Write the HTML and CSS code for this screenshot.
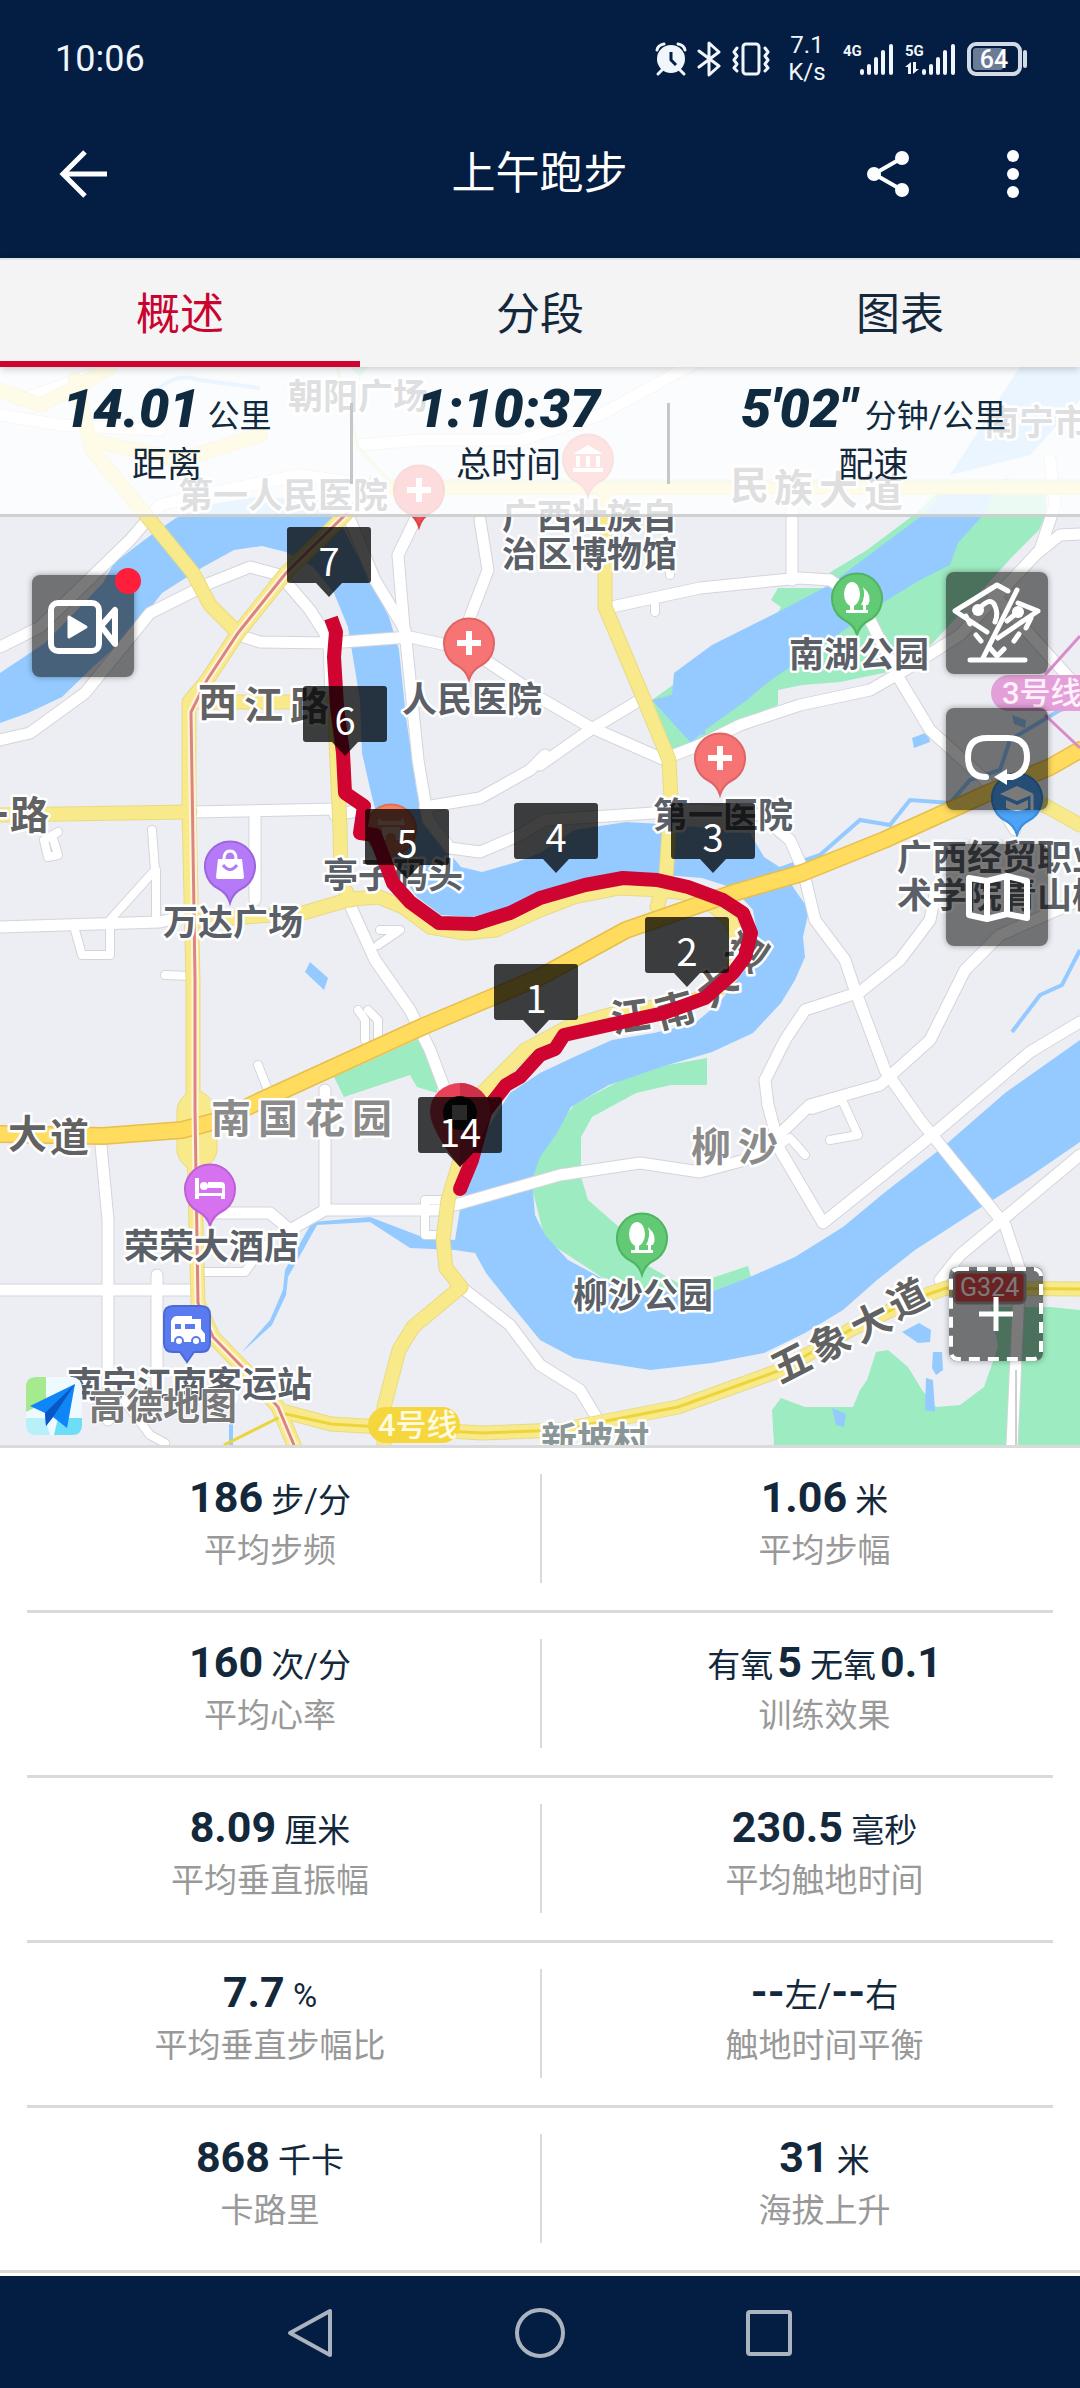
FILE: index.html
```html
<!DOCTYPE html>
<html lang="zh-CN">
<head>
<meta charset="utf-8">
<meta name="viewport" content="width=device-width, initial-scale=1">
<title>上午跑步</title>
<link rel="stylesheet" href="styles.css">
</head>
<body>
<header class="top">
  <div class="status">
    <span class="clock">10:06</span>
    <div class="indicators">
      <svg class="icon" width="32" height="36" viewBox="0 0 32 36" aria-label="闹钟">
        <g fill="none" stroke="#f1f5fc" stroke-width="3" stroke-linecap="round"><path d="M2 9Q3 4 9 3M30 9Q29 4 23 3M7 29l-4 4M25 29l4 4"/></g>
        <circle cx="16" cy="18" r="14" fill="#f1f5fc"/><path d="M16 11v8l5 5" fill="none" stroke="#031e42" stroke-width="3"/>
      </svg>
      <svg class="icon" width="24" height="36" viewBox="0 0 24 36" aria-label="蓝牙"><path d="M2 10l20 15-10 9V2l10 9L2 26" fill="none" stroke="#f1f5fc" stroke-width="3" stroke-linejoin="round" stroke-linecap="round"/></svg>
      <svg class="icon" width="40" height="36" viewBox="0 0 40 36" aria-label="振动"><g fill="none" stroke="#f1f5fc" stroke-width="3" stroke-linejoin="round" stroke-linecap="round"><rect x="12" y="3" width="16" height="30" rx="3"/><path d="M6 7L3 11l3 4-3 4 3 4-3 4 3 3M34 7l3 4-3 4 3 4-3 4 3 4-3 3"/></g></svg>
      <div class="speed"><span>7.1</span><span>K/s</span></div>
      <svg class="icon" width="52" height="36" viewBox="0 0 52 36"><text x="0" y="15" class="net">4G</text><path d="M19 30v2M26 25v7M33 18v14M40 11v21M48 5v27" stroke="#f1f5fc" stroke-width="4" stroke-linecap="round"/></svg>
      <svg class="icon" width="52" height="36" viewBox="0 0 52 36"><text x="0" y="15" class="net">5G</text><path d="M19 30v2M26 25v7M33 18v14M40 11v21M48 5v27" stroke="#f1f5fc" stroke-width="4" stroke-linecap="round"/><path d="M0 26l6-5v12H3v-7zM8 33V21h3v7h3z" fill="#f1f5fc"/></svg>
      <svg class="icon" width="62" height="36" viewBox="0 0 62 36"><rect x="2" y="3" width="51" height="30" rx="7" fill="none" stroke="#d3dae6" stroke-width="4"/><rect x="6" y="7" width="30" height="22" rx="3" fill="#6b7b96"/><path d="M58 11v14" stroke="#d3dae6" stroke-width="4" stroke-linecap="round"/><text x="27" y="27" class="charge">64</text></svg>
    </div>
  </div>
  <div class="appbar">
    <button class="plain" aria-label="返回"><svg width="50" height="50" viewBox="0 0 50 50"><path d="M48 25H5M26 3L4 25l22 22" fill="none" stroke="#fff" stroke-width="5"/></svg></button>
    <h1>上午跑步</h1>
    <div class="actions">
      <button class="plain" aria-label="分享"><svg width="44" height="48" viewBox="0 0 44 48"><path d="M36 8L8 24l28 16" fill="none" stroke="#fff" stroke-width="4"/><g fill="#fff"><circle cx="36" cy="8" r="7"/><circle cx="8" cy="24" r="7"/><circle cx="36" cy="40" r="7"/></g></svg></button>
      <button class="plain" aria-label="更多"><svg width="14" height="50" viewBox="0 0 14 50"><g fill="#fff"><circle cx="7" cy="7" r="6"/><circle cx="7" cy="25" r="6"/><circle cx="7" cy="43" r="6"/></g></svg></button>
    </div>
  </div>
</header>

<nav class="tabs">
  <a href="#overview" class="tab active">概述</a>
  <a href="#splits" class="tab">分段</a>
  <a href="#charts" class="tab">图表</a>
</nav>

<main id="overview">
<section class="map">
<svg class="canvas" viewBox="0 367 1080 1078" role="img" aria-label="跑步路线">
<defs>
  <g id="streets">
    <path d="M0 647L40 627 130 540 160 505 200 495 300 475 350 482"/>
    <path d="M0 740L30 733 85 693 150 613 210 583 250 567 280 575 310 610 329 640 331 700"/>
    <path d="M0 415L60 425 160 430 M20 400L100 372"/>
    <path d="M350 520L375 580 405 630 412 700 418 760 428 820 450 848 480 852 520 835 545 820 700 810 760 815 790 840 803 870 815 920 845 960 855 990 885 1070 920 1120 1005 1225 1020 1270"/>
    <path d="M238 635L260 642 330 643 410 637 470 650 530 690"/>
    <path d="M415 520L398 555 405 640 M480 520L488 570 465 630"/>
    <path d="M360 445L420 440 520 440 600 415 700 360"/>
    <path d="M607 608L700 588 800 578 830 580 M792 580V510"/>
    <path d="M830 580L860 600 900 680 930 730 985 780 1015 830"/>
    <path d="M674 755L700 745 740 725 800 705 870 690 905 670 960 635 1040 550 1055 505 1050 460"/>
    <path d="M540 765L590 730 640 700 M540 698L590 727 665 760"/>
    <path d="M425 807L480 798 530 770 545 755"/>
    <path d="M193 812L335 809 M335 815L362 810 M255 812V900"/>
    <path d="M0 927L160 922 200 912"/>
    <path d="M100 1135L108 1220V1420 M0 1290H190 M157 1275V1385"/>
    <path d="M325 1090V1210 M215 1213H270L290 1230 325 1210H440"/>
    <path d="M455 1205L560 1175 640 1163 700 1172 745 1160 784 1140 M768 1105L780 1150 823 1223 930 1137 1030 1052 1080 1022"/>
    <path d="M768 1105L765 1080 785 1040 805 1010 860 992 900 960 930 920 935 895 M784 1130L810 1105 880 1085 930 1040 965 970 1000 935 1080 900"/>
    <path d="M350 905L375 960 410 1010 430 1050 445 1090"/>
    <path d="M461 1287L510 1325 540 1365 580 1390 598 1420"/>
    <path d="M1020 1270L1012 1445 M940 1280L960 1255 1080 1155 M990 590L1080 690 M1035 555L1060 535 1080 534"/>
  </g>
  <g id="lanes">
    <path d="M152 830L155 870 110 920V955H82L75 930 M156 870V915 M52 835L58 855 48 857 44 840 58 832"/>
    <path d="M165 975L190 976 M205 1272H245L265 1245 M258 1065L270 1095 M365 1040V1020L358 1010 M378 1038V1020L368 1010"/>
    <path d="M378 945L400 930 380 930 M445 1200H425V1235H445 M670 575V550 M655 605V612"/>
    <path d="M790 1138L805 1155 M812 1110L842 1100 858 1135 830 1140 M120 1395L150 1435 165 1443"/>
  </g>
  <g id="yellow">
    <path d="M0 390L40 405 80 385 110 367 M75 380L92 450 150 520 193 573 210 605 238 633"/>
    <path d="M90 440L180 460 260 435"/>
    <path d="M380 487H1080 M605 490V607L640 690 669 760 671 800 666 877 657 907"/>
    <path d="M346 514L286 573 238 633 207 680 189 702V812L193 980V1110L198 1303 213 1337 248 1373 278 1407 294 1445"/>
    <path d="M0 815L190 812 M190 702H331 M334 700L340 827 341 883 351 900"/>
    <path d="M200 920L303 913 351 899 379 897 403 907 430 927 465 933 496 930 540 910 574 897 619 888 661 890 700 895 730 920 742 950 725 985 695 1000 609 1015 568 1027 525 1050 482 1093 461 1157 448 1200 443 1240 446 1268 461 1287 413 1327 399 1350 384 1407V1445"/>
    <path d="M1035 800L1080 825"/>
    <path d="M282 1411L331 1424 482 1433 560 1430 678 1407 781 1370 850 1330 912 1300 946 1288 1080 1289"/>
  </g>
  <path id="highway" d="M0 1134L103 1136 182 1130 220 1120 262 1100 424 1026 540 977 626 930 733 893 802 873 884 840 988 793 1050 767 1080 750"/>
  <path id="pin" d="M0 37Q-3 27-11 23A25 25 0 1 1 11 23Q3 27 0 37Z"/>
  <path id="flag" d="M-39-70H39Q42-70 42-67V-17Q42-14 39-14H13L0 0-13-14H-39Q-42-14-42-17V-67Q-42-70-39-70Z"/>
  <g id="trees"><ellipse cx="-5" cy="-4" rx="8" ry="12"/><path d="M6-11Q16-2 11 7H4Q9-2 6-11Z"/><path d="M-7 5h4v9h-4zM6 5h3v9H6zM-11 12h22v3h-22z"/></g>
</defs>

<rect y="367" width="1080" height="1078" fill="#eceef3"/>

<!-- parks -->
<g fill="#9debc1">
  <path d="M829 573L867 550 915 514 940 490 1046 490V514L1039 530 1012 557 970 603 929 647 898 670 840 682 802 685 778 690V705L736 723 705 740 674 753 652 700 712 657 774 620 781 607 771 600 778 588 830 588Z"/>
  <path d="M334 1077L422 1037 437 1080V1093L417 1087 410 1075 344 1097Z"/>
  <path d="M774 1445L772 1410 781 1398 805 1407H853L860 1390 867 1380 876 1352 888 1350 908 1367 922 1390 936 1407 960 1405 984 1387 998 1347 991 1307H1050L1080 1310V1445Z"/>
  <path d="M707 1058V1085H671L636 1093 592 1117 581 1137V1177L588 1200 619 1227 643 1263 678 1283 712 1278 748 1266 751 1277 716 1290 678 1294 609 1282 545 1240 530 1180 540 1150 574 1105 640 1070Z"/>
  <path d="M350 367h18l-8 10z"/>
</g>

<!-- rivers and lakes -->
<g fill="#94caff">
  <path d="M0 673L45 643 103 583 114 563 151 535 176 518 207 505 255 497 320 500 344 530 372 583 389 617 399 650 406 717 417 793 430 820 444 847 461 867 482 872 517 862 540 853 574 830 626 822 678 825 750 833 764 857 781 868 795 890 809 910 803 937 805 957 795 980 781 1003 753 1033 712 1052 661 1067 609 1085 571 1107 557 1133 540 1157 532 1180 535 1215 545 1235 568 1260 609 1282 678 1294 716 1290 750 1277 795 1257 843 1227 884 1193 943 1147 1005 1093 1080 1040V1142L1029 1177 977 1210 915 1250 877 1280 843 1310 805 1333 764 1353 712 1363 650 1370 574 1358 540 1340 513 1307 486 1273 475 1253 455 1250 410 1248 370 1222 317 1225 288 1277 286 1295 272 1325 241 1353 270 1320 283 1290 285 1270 312 1222 370 1217 425 1238 455 1240 461 1203 470 1183 482 1137 510 1093 540 1073 574 1057 612 1040 654 1033 695 1023 719 1003 747 967 757 933 753 910 733 888 702 878 626 872 585 880 506 908 472 917 441 915 417 897 390 860 372 797 362 753 360 700 348 627 334 593 313 567 286 552 262 546 234 550 203 567 162 593 131 633 93 667 62 697 28 713 0 723Z"/>
  <path d="M674 673L712 645 788 607 829 585 924 514 945 490 1010 478 990 500 984 514 958 543 950 565 920 580 884 602 826 643 771 680 747 700 705 730 691 743 652 700 672 695Z"/>
  <path d="M1020 367H1080V400L1030 455 950 475Z"/>
  <path d="M310 962L328 978 324 990 305 972ZM912 738L928 732 930 742 914 748ZM1012 715L1026 720 1025 728 1014 724ZM902 1332L919 1323 931 1330 930 1342 918 1343ZM933 1352H942L943 1370 936 1375 932 1368ZM926 1378L933 1380 935 1412 925 1410ZM832 1408L846 1414 844 1427 836 1425Z"/>
</g>
<g fill="none" stroke="#94caff" stroke-width="4">
  <path d="M780 869L820 855 860 820 890 825 910 800 950 803 970 780 1000 770 1010 740 1060 710 1080 705"/>
  <path d="M1012 1032L1040 995 1062 985 1080 950 M231 1445V1405 M150 400Q170 370 200 380L260 388 M670 695L672 710 690 730 705 733"/>
</g>

<!-- roads: edge first, surface on top -->
<use href="#streets" class="road edge street"/><use href="#lanes" class="road edge lane"/>
<use href="#streets" class="road white street"/><use href="#lanes" class="road white lane"/>
<use href="#yellow" class="road yedge"/>
<g fill="#f8ea8b" stroke="#ecd97a"><path d="M190 1092Q178 1098 177 1110V1152Q180 1165 192 1170H202Q217 1160 217 1150V1112Q215 1100 202 1092Z"/></g>
<use href="#yellow" class="road yfill"/>
<use href="#highway" class="road hedge"/><use href="#highway" class="road hfill"/>
<path d="M224 1445L286 1414 331 1424 482 1433 560 1430 678 1407 781 1370 850 1330 912 1300 946 1288 1080 1289" class="line" stroke="#ecd53a"/>
<path d="M346 514L286 573 238 633 207 680 191 712 195 980V1110L198 1303 213 1337 248 1373 278 1407 294 1445" class="line glow" stroke="#fff4d8"/>
<path d="M372 477L346 514 286 573 238 633 207 680 191 712 195 980V1110L198 1303 213 1337 248 1373 278 1407 294 1445" class="line" stroke="#db8583"/>
<path d="M337 367L358 447 390 482H1080" class="line" stroke="#d5e3a8"/>
<path d="M1080 636L1045 675M1045 715L1080 748" class="line" stroke="#d98ccb"/>
<g stroke="#9b9ea3" stroke-width="1"><path d="M1016 1370V1445"/></g>

<!-- place pins -->
<g stroke-width="2">
  <g transform="translate(469 643)"><use href="#pin" fill="#f77474" stroke="#e06464"/><path d="M-12 0H12M0-12V12" stroke="#fff" stroke-width="6"/></g>
  <g transform="translate(720 758)"><use href="#pin" fill="#f77474" stroke="#e06464"/><path d="M-12 0H12M0-12V12" stroke="#fff" stroke-width="6"/></g>
  <g transform="translate(419 490)"><use href="#pin" fill="#f04f4f" stroke="#dd4545"/><path d="M-12 0H12M0-12V12" stroke="#fff" stroke-width="6"/></g>
  <g transform="translate(588 459)"><use href="#pin" fill="#f2766b" stroke="#de6a60"/><path d="M-15-5L0-14 15-5ZM-12-3h4V8h-4zM-2-3h4V8h-4zM8-3h4V8H8zM-15 9h30v4h-30z" fill="#fff"/></g>
  <g transform="translate(857 598)"><use href="#pin" fill="#62c974" stroke="#4fb463"/><use href="#trees" fill="#fff"/></g>
  <g transform="translate(642 1238)"><use href="#pin" fill="#62c974" stroke="#4fb463"/><use href="#trees" fill="#fff"/></g>
  <g transform="translate(230 866)"><use href="#pin" fill="#b47af8" stroke="#9c66dd"/><path d="M-12-7H12L14 11Q14 13 12 13H-12Q-14 13-14 11Z" fill="#fff"/><path d="M-6-7Q-6-15 0-15T6-7" fill="none" stroke="#fff" stroke-width="3"/><path d="M-7-1Q0 8 7-1" fill="none" stroke="#b47af8" stroke-width="3"/></g>
  <g transform="translate(210 1189)"><use href="#pin" fill="#d672f0" stroke="#be60d8"/><path d="M-15-11h4V4h23V-1H-2V-7H11Q15-7 15-3V10H11V7H-11V10H-15Z" fill="#fff"/><circle cx="-6" cy="-3" r="4" fill="#fff"/></g>
  <g transform="translate(391 829)"><use href="#pin" fill="#f58262" stroke="#e07354"/><path d="M-12-11L-9-8H9L12-11 14-4H-14ZM-9-2H9V4H13V11H5V7Q0 1-5 7V11H-13V4H-9Z" fill="#fbc9b8"/></g>
  <g transform="translate(1017 798)"><use href="#pin" fill="#4da3f5" stroke="#3c8ddd"/><path d="M-17-4L0-12 17-4 0 3ZM-11 2L0 7 11 2V10Q0 16-11 10Z" fill="#fff"/><path d="M15-3V12" stroke="#fff" stroke-width="3"/></g>
  <g transform="translate(187 1329)"><path d="M-14-23H14Q23-23 23-14V14Q23 23 14 23H7L0 33-7 23H-14Q-23 23-23 14V-14Q-23-23-14-23Z" fill="#5a7af0" stroke="#4b69d8"/><path d="M-16-8Q-14-13-10-13H5V-10H14V0L18 5V13H-16Z" fill="#fff"/><path d="M-12-5h6v5h-6zM-2-5h10v5H-2z" fill="#5a7af0"/><g fill="#fff" stroke="#5a7af0"><circle cx="-8" cy="12" r="4"/><circle cx="9" cy="12" r="4"/></g></g>
</g>

<!-- place names -->
<g class="poi">
  <text x="288" y="409">朝阳广场</text>
  <text x="178" y="508">第一人民医院</text>
  <text x="502" y="529">广西壮族自</text><text x="502" y="567">治区博物馆</text>
  <text x="402" y="712">人民医院</text>
  <text x="789" y="667">南湖公园</text>
  <text x="653" y="828">第一医院</text>
  <text x="323" y="888">亭子码头</text>
  <text x="163" y="935">万达广场</text>
  <text x="897" y="870">广西经贸职业技</text><text x="897" y="908">术学院青山校区</text>
  <text x="124" y="1259">荣荣大酒店</text>
  <text x="573" y="1308">柳沙公园</text>
  <text x="67" y="1397">南宁江南客运站</text>
  <text x="984" y="435">南宁市人</text>
</g>
<g class="road-name">
  <text x="198 244 290" y="716 719 720">西江路</text><text x="-31 10" y="829">一路</text><text x="-40 8 50" y="1148 1148 1151">平大道</text>
  <text x="730 774 819 864" y="499 502 504 506">民族大道</text>
  <text x="613 660 710 748" y="1033 1029 1009 975" rotate="-8 -15 -38 -55">江南大道</text>
  <text x="780 819 860 897" y="1384 1364 1344 1320" rotate="-27">五象大道</text>
</g>
<g class="area">
  <text x="211 258 305 352" y="1133">南国花园</text>
  <text x="691 738" y="1161">柳沙</text>
  <text x="541 577 613" y="1453" class="village">新坡村</text>
</g>
<g class="metro">
  <rect x="991" y="675" width="110" height="36" rx="18" fill="#e3a0d8"/><text x="1002" y="704" fill="#fff0fb">3号线</text>
  <rect x="368" y="1407" width="92" height="36" rx="18" fill="#f5d63c"/><text x="378" y="1436" fill="#fffbe0">4号线</text>
</g>
<rect x="954" y="1272" width="71" height="31" rx="5" fill="#dd4747" stroke="#a5a5a5" stroke-width="3"/><text x="960" y="1296" class="shield">G324</text>

<!-- recorded track and finish pin -->
<path d="M331 618L336 632 334 657 337 707 343 753 345 793 364 806 360 833 375 835 393 883 410 902 439 923 475 924 510 913 540 898 585 885 623 878 657 880 688 887 723 900 743 913 751 933 745 957 733 973 705 998 664 1013 609 1025 564 1035 555 1049 540 1055 520 1077 506 1085 485 1112 472 1160 460 1189" class="track"/>
<circle cx="460" cy="1189" r="7" fill="#cf0430"/>
<path d="M460 1167Q430 1130 430 1111A30 28 0 0 1 490 1111Q490 1130 460 1167Z" fill="#e8425b"/><path d="M460 1083A30 28 0 0 1 490 1111Q490 1130 460 1167Z" fill="#cf2f48"/><circle cx="460" cy="1113" r="17" fill="#111"/><path d="M452 1105h15v15h-15z" fill="#a8a8a8"/>
<g class="flags">
  <use href="#flag" x="329" y="597"/><use href="#flag" x="345" y="756"/><use href="#flag" x="407" y="879"/><use href="#flag" x="556" y="873"/><use href="#flag" x="713" y="873"/><use href="#flag" x="687" y="987"/><use href="#flag" x="536" y="1034"/><use href="#flag" x="460" y="1167"/>
</g>
<g class="km">
  <text x="329" y="576">7</text><text x="345" y="735">6</text><text x="407" y="858">5</text><text x="556" y="852">4</text><text x="713" y="852">3</text><text x="687" y="966">2</text><text x="536" y="1013">1</text><text x="460" y="1147">14</text>
</g>

<!-- map provider mark -->
<g>
  <rect x="26" y="1377" width="56" height="58" rx="10" fill="#eefaff"/><path d="M36 1377H46V1402L26 1412V1387Q26 1377 36 1377Z" fill="#a5ea8e"/><path d="M58 1418H82V1425Q82 1435 72 1435H54Z" fill="#6dddf8"/><path d="M26 1418H45L50 1435H36Q26 1435 26 1425Z" fill="#b8f0fa"/>
  <path d="M75 1384L30 1406 45 1413 46 1426 53 1417 67 1428Z" fill="#0f86f8"/><path d="M75 1384L45 1413 46 1426 53 1417Z" fill="#0a56c4"/>
  <text x="89" y="1420" class="brand">高德地图</text>
</g>
</svg>

<div class="summary">
  <div class="metric"><p class="big"><b>14.01</b> 公里</p><p class="name">距离</p></div>
  <div class="metric"><p class="big"><b>1:10:37</b></p><p class="name">总时间</p></div>
  <div class="metric"><p class="big"><b>5'02"</b> 分钟/公里</p><p class="name">配速</p></div>
</div>

<div class="tools left">
  <button class="tool" aria-label="轨迹视频"><svg width="102" height="102" viewBox="0 0 102 102"><g fill="none" stroke="#fff" stroke-width="6" stroke-linejoin="round"><rect x="19" y="28" width="48" height="48" rx="7"/><path d="M69 51L83 35V69Z"/></g><path d="M37 42L54 52 37 62Z" fill="#fff" stroke="#fff" stroke-width="3" stroke-linejoin="round"/></svg><span class="dot"></span></button>
</div>
<div class="tools right">
  <button class="tool" aria-label="隐藏公里标记"><svg width="102" height="102" viewBox="0 0 102 102"><g fill="none" stroke="#fff" stroke-width="5" stroke-linecap="round" stroke-linejoin="round"><path d="M62 19L51 13 9 39 41 60M20 44L24 52M72 31L92 39 52 66M85 46L80 56M71 18L37 86M24 88H79" /><path d="M32 38Q43 25 48 32 53 41 49 50" /><path d="M72 40L61 49M30 63L35 69M73 62L68 69M44 76L51 84 58 77"/></g><circle cx="32" cy="38" r="6" fill="#fff"/><circle cx="72" cy="40" r="6" fill="#fff"/></svg></button>
  <button class="tool" aria-label="重播轨迹"><svg width="102" height="102" viewBox="0 0 102 102"><path d="M40 69Q22 69 22 49 22 30 41 30H62Q81 30 81 49 81 65 66 69H60" fill="none" stroke="#fff" stroke-width="6" stroke-linecap="round"/><path d="M48 69L61 61V77Z" fill="#fff"/></svg></button>
  <button class="tool" aria-label="地图图层"><svg width="102" height="102" viewBox="0 0 102 102"><path d="M23 34L41 37 61 32 81 37V74L61 70 41 75 23 71ZM41 37V75M61 32V70" fill="none" stroke="#fff" stroke-width="6" stroke-linejoin="round"/></svg></button>
</div>
<button class="expand" aria-label="放大地图"><svg width="94" height="94" viewBox="0 0 94 94"><rect x="2" y="2" width="90" height="90" rx="7" fill="none" stroke="#fff" stroke-width="4" stroke-dasharray="11 8"/><path d="M30 47H64M47 30V64" stroke="#fff" stroke-width="5"/></svg></button>
</section>

<section class="stats">
  <div class="row"><div class="cell"><p class="value"><b>186</b> 步/分</p><p class="label">平均步频</p></div><div class="cell"><p class="value"><b>1.06</b> 米</p><p class="label">平均步幅</p></div></div>
  <div class="row"><div class="cell"><p class="value"><b>160</b> 次/分</p><p class="label">平均心率</p></div><div class="cell"><p class="value">有氧<b class="after">5</b> 无氧<b class="after">0.1</b></p><p class="label">训练效果</p></div></div>
  <div class="row"><div class="cell"><p class="value"><b>8.09</b> 厘米</p><p class="label">平均垂直振幅</p></div><div class="cell"><p class="value"><b>230.5</b> 毫秒</p><p class="label">平均触地时间</p></div></div>
  <div class="row"><div class="cell"><p class="value"><b>7.7</b> %</p><p class="label">平均垂直步幅比</p></div><div class="cell"><p class="value"><b>--</b>左/<b>--</b>右</p><p class="label">触地时间平衡</p></div></div>
  <div class="row"><div class="cell"><p class="value"><b>868</b> 千卡</p><p class="label">卡路里</p></div><div class="cell"><p class="value"><b>31</b> 米</p><p class="label">海拔上升</p></div></div>
</section>
</main>

<footer class="system">
  <button class="plain" aria-label="返回键"><svg width="52" height="52" viewBox="0 0 52 52"><path d="M45 4V48L5 26Z" fill="none" stroke="#abb3bf" stroke-width="4" stroke-linejoin="round"/></svg></button>
  <button class="plain" aria-label="主屏幕"><svg width="52" height="52" viewBox="0 0 52 52"><circle cx="26" cy="26" r="23" fill="none" stroke="#abb3bf" stroke-width="4"/></svg></button>
  <button class="plain" aria-label="最近任务"><svg width="52" height="52" viewBox="0 0 52 52"><rect x="5" y="5" width="42" height="42" rx="2" fill="none" stroke="#abb3bf" stroke-width="4"/></svg></button>
</footer>
</body>
</html>
```
FILE: styles.css
```css
* { box-sizing: border-box; }
body {
  margin: 0;
  min-height: 100vh;
  display: flex;
  flex-direction: column;
  background: #fff;
  color: #14283c;
  font-family: Roboto, "Noto Sans CJK SC", sans-serif;
}
p, h1 { margin: 0; }
button { border: 0; padding: 0; background: none; cursor: pointer; }
svg { display: block; }

.top { background: #031e42; color: #fff; }
.status {
  height: 118px;
  padding: 0 51px 0 55px;
  display: flex;
  align-items: center;
  justify-content: space-between;
}
.clock { font-size: 36px; color: #f1f5fc; }
.indicators { display: flex; align-items: center; gap: 10px; }
.speed {
  width: 52px;
  display: flex;
  flex-direction: column;
  align-items: center;
  font-size: 24px;
  line-height: 27px;
  color: #f1f5fc;
}
.net { font: bold 15px Roboto, sans-serif; fill: #f1f5fc; }
.charge { font: 500 25px Roboto, sans-serif; fill: #fff; text-anchor: middle; }

.appbar {
  height: 140px;
  padding: 0 60px 28px 59px;
  display: grid;
  grid-template-columns: 1fr auto 1fr;
  align-items: center;
}
.appbar h1 { font-size: 44px; font-weight: 400; line-height: 60px; }
.actions { display: flex; justify-content: flex-end; align-items: center; gap: 96px; }

.tabs {
  display: grid;
  grid-template-columns: repeat(3, 1fr);
  background: #f4f4f4;
  border-top: 2px solid #dfe4e4;
  position: relative;
  z-index: 2;
  box-shadow: 0 2px 8px rgba(0, 0, 0, .2);
}
.tab {
  height: 107px;
  border-bottom: 6px solid transparent;
  display: flex;
  align-items: center;
  justify-content: center;
  font-size: 44px;
  color: #14283c;
  text-decoration: none;
}
.tab.active { color: #c8042f; border-color: #cf0430; }

.map { position: relative; border-bottom: 3px solid #dadada; }
.canvas { width: 100%; height: auto; }
.road { fill: none; stroke-linejoin: round; stroke-linecap: round; }
.edge { stroke: #d3d5da; }
.white { stroke: #fff; }
.edge.street { stroke-width: 13px; }
.white.street { stroke-width: 11px; }
.edge.lane { stroke-width: 10px; }
.white.lane { stroke-width: 8px; }
.yedge { stroke: #e8da85; stroke-width: 15px; }
.yfill { stroke: #f8ea8b; stroke-width: 13px; }
.hedge { stroke: #e6bf4c; stroke-width: 18px; }
.hfill { stroke: #ffdb5e; stroke-width: 15px; }
.line { fill: none; stroke-width: 3px; }
.glow { stroke-width: 7px; }
.track { fill: none; stroke: #cf0430; stroke-width: 14px; stroke-linejoin: round; }

.poi, .road-name, .area, .brand {
  font-family: "Noto Sans CJK SC", sans-serif;
  font-weight: 700;
  paint-order: stroke;
  stroke: #fff;
  stroke-width: 5px;
  stroke-linejoin: round;
}
.poi { font-size: 35px; fill: #5a5f68; }
.road-name { font-size: 39px; fill: #626262; }
.area { font-size: 40px; fill: #8b8b8b; }
.village { font-size: 36px; fill: #8a9696; }
.brand { font-size: 37px; fill: #777; stroke-width: 2px; }
.metro text { font: 500 31px Roboto, "Noto Sans CJK SC", sans-serif; }
.shield { font: 25px Roboto, sans-serif; fill: #fff; }
.flags { fill: #000; fill-opacity: .75; }
.km text { font: 400 38px "Noto Sans CJK SC", sans-serif; fill: #fff; text-anchor: middle; }

.summary {
  position: absolute;
  top: 0;
  left: 0;
  width: 100%;
  display: grid;
  grid-template-columns: 350fr 317fr 413fr;
  padding: 20px 0 27px;
  background: rgba(255, 255, 255, .8);
  border-bottom: 3px solid rgba(190, 190, 190, .7);
}
.metric { text-align: center; position: relative; }
.metric:first-child { padding-right: 16px; }
.metric + .metric::before {
  content: "";
  position: absolute;
  left: 0;
  top: 16px;
  width: 3px;
  height: 81px;
  background: #c4c7ca;
}
.big { font-size: 32px; line-height: 58px; color: #102a3f; }
.big b { font-size: 54px; line-height: 0; font-weight: 900; font-style: italic; }
.name { font-size: 35px; line-height: 42px; }

.tools { position: absolute; top: 205px; display: flex; flex-direction: column; gap: 34px; }
.left { left: 32px; top: 208px; }
.right { right: 32px; }
.tool, .expand { border-radius: 8px; background: rgba(0, 0, 0, .52); box-shadow: 0 0 6px rgba(0, 0, 0, .35); }
.tool { position: relative; }
.dot {
  position: absolute;
  top: -7px;
  right: -7px;
  width: 26px;
  height: 26px;
  border-radius: 50%;
  background: #ff1f3a;
}
.expand { position: absolute; right: 37px; bottom: 84px; }

.stats { border-bottom: 3px solid #dadada; }
.row {
  margin: 0 27px;
  padding: 26px 0 27px;
  display: grid;
  grid-template-columns: 1fr 1fr;
  border-bottom: 3px solid #dadada;
}
.row:last-child { border-bottom: 0; }
.cell { height: 109px; text-align: center; padding-right: 27px; }
.cell + .cell { border-left: 2px solid #dadada; padding: 0 0 0 54px; }
.value { font-size: 33px; line-height: 54px; }
.value b { font-size: 43px; line-height: 0; font-weight: 700; }
.value .after { margin-left: 4px; }
.label { font-size: 33px; line-height: 46px; color: #999; }

.system {
  flex: 1;
  min-height: 114px;
  margin-top: 3px;
  display: flex;
  align-items: center;
  justify-content: center;
  gap: 177px;
  background: #031e42;
}
```
